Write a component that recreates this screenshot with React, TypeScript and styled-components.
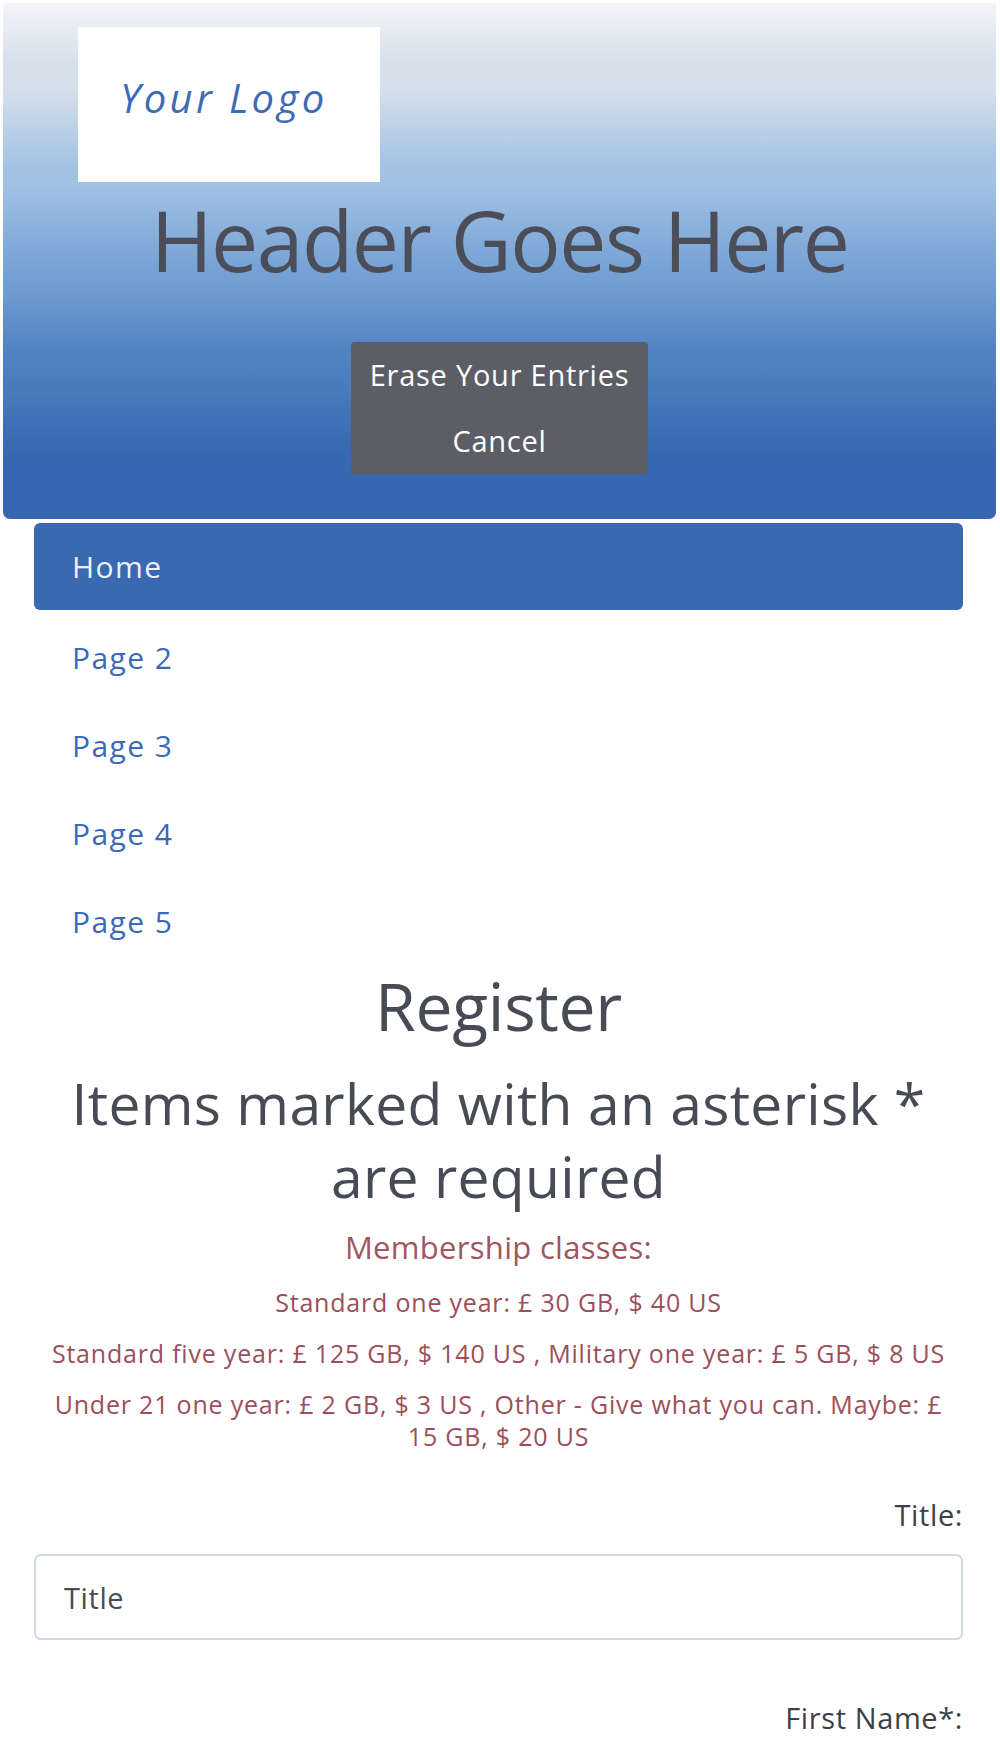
import React from "react";
import styled, { createGlobalStyle } from "styled-components";

const Global = createGlobalStyle`
  html, body { margin: 0; padding: 0; background: #ffffff; }
  body { font-family: "Open Sans", "Noto Sans", sans-serif; color: #474b55; }
  * { box-sizing: border-box; }
`;

const Page = styled.div`
  width: 1000px;
  display: flex;
  flex-direction: column;
`;

const Header = styled.header`
  margin: 3px 4px 0 3px;
  height: 516px;
  border-radius: 0 0 7px 7px;
  background: linear-gradient(
    to bottom,
    #f3f5f9 0%,
    #d6e0eb 11.5%,
    #d6e0eb 16.5%,
    #a2c2e4 32%,
    #a2c2e4 35%,
    #76a2d5 51.4%,
    #739fd3 54.3%,
    #5383c2 66.9%,
    #5080c0 70.7%,
    #3866b0 88%,
    #3866b0 100%
  );
  display: flex;
  flex-direction: column;
  padding: 24px 0 0 75px;
`;

const LogoBox = styled.div`
  width: 302px;
  height: 155px;
  background: #ffffff;
  display: flex;
  align-items: center;
  padding-left: 42px;
  padding-bottom: 14px;
`;

const LogoText = styled.span`
  font-family: "Open Sans", sans-serif;
  font-style: italic;
  font-size: 40px;
  color: #3d6bb5;
  letter-spacing: 3.4px;
`;

const Title = styled.h1`
  margin: 0 0 0 -75px;
  font-family: "Open Sans", sans-serif;
  font-weight: 400;
  font-size: 84px;
  line-height: 116px;
  letter-spacing: -1.5px;
  text-align: center;
  color: #4b4e58;
`;

const ButtonBox = styled.div`
  align-self: center;
  margin: 44px 0 0 -75px;
  width: 297px;
  height: 132px;
  background: #5c5d65;
  border-radius: 4px;
  display: flex;
  flex-direction: column;
  align-items: center;
  justify-content: center;
  gap: 22px;
`;

const HeaderButton = styled.span`
  font-family: "Open Sans", sans-serif;
  font-size: 29px;
  line-height: 44px;
  color: #ffffff;
  letter-spacing: 0.75px;
`;

const Nav = styled.nav`
  display: flex;
  flex-direction: column;
  padding: 4px 37px 0 34px;
`;

const NavItem = styled.a<{ $active?: boolean }>`
  display: flex;
  align-items: center;
  height: ${(p) => (p.$active ? "87px" : "88px")};
  margin-bottom: ${(p) => (p.$active ? "3px" : "0")};
  padding-left: 38px;
  border-radius: 6px;
  background: ${(p) => (p.$active ? "#3a69b1" : "transparent")};
  color: ${(p) => (p.$active ? "#eef2f8" : "#3a6ab5")};
  font-family: "Open Sans", sans-serif;
  font-size: 30px;
  text-decoration: none;
  letter-spacing: 1.4px;
`;

const Main = styled.main`
  display: flex;
  flex-direction: column;
  align-items: center;
  padding: 5px 37px 0 34px;
`;

const Heading = styled.h2`
  margin: 0;
  font-family: "Open Sans", sans-serif;
  font-weight: 400;
  font-size: 66px;
  line-height: 70px;
  letter-spacing: -0.3px;
  color: #474b55;
  text-align: center;
`;

const SubHeading = styled.h3`
  margin: 27px 0 0;
  font-family: "Open Sans", sans-serif;
  font-weight: 400;
  font-size: 57px;
  line-height: 73px;
  letter-spacing: 0.3px;
  color: #474b55;
  text-align: center;
  width: 100%;
`;

const Membership = styled.p`
  margin: 14px 0 0;
  font-family: "Open Sans", sans-serif;
  font-size: 31px;
  line-height: 40px;
  letter-spacing: 0.3px;
  color: #a0555f;
  text-align: center;
`;

const Price = styled.p`
  margin: 19px 0 0;
  max-width: 900px;
  font-family: "Open Sans", sans-serif;
  font-size: 25px;
  line-height: 32px;
  letter-spacing: 0.8px;
  color: #9c4f5a;
  text-align: center;
`;

const Field = styled.div<{ $gap: number }>`
  width: 100%;
  display: flex;
  flex-direction: column;
  margin-top: ${(p) => p.$gap}px;
`;

const Label = styled.label`
  align-self: flex-end;
  font-family: "Open Sans", sans-serif;
  font-size: 29px;
  line-height: 36px;
  color: #3c3f47;
  letter-spacing: 0.6px;
`;

const Input = styled.input`
  margin-top: 21px;
  width: 100%;
  height: 86px;
  border: 2px solid #cfd8e6;
  border-radius: 7px;
  padding: 0 28px;
  font-family: "Open Sans", sans-serif;
  font-size: 29px;
  letter-spacing: 0.6px;
  color: #3c3f47;
  outline: none;
  &::placeholder { color: #4a4c55; opacity: 1; }
`;

const pages = ["Page 2", "Page 3", "Page 4", "Page 5"];
const prices = [
  "Standard one year: £ 30 GB, $ 40 US",
  "Standard five year: £ 125 GB, $ 140 US , Military one year: £ 5 GB, $ 8 US",
  "Under 21 one year: £ 2 GB, $ 3 US , Other - Give what you can. Maybe: £ 15 GB, $ 20 US",
];

export default function App() {
  return (
    <Page>
      <Global />
      <Header>
        <LogoBox>
          <LogoText>Your Logo</LogoText>
        </LogoBox>
        <Title>Header Goes Here</Title>
        <ButtonBox>
          <HeaderButton>Erase Your Entries</HeaderButton>
          <HeaderButton>Cancel</HeaderButton>
        </ButtonBox>
      </Header>
      <Nav>
        <NavItem $active href="#">Home</NavItem>
        {pages.map((p) => (
          <NavItem key={p} href="#">{p}</NavItem>
        ))}
      </Nav>
      <Main>
        <Heading>Register</Heading>
        <SubHeading>Items marked with an asterisk * are required</SubHeading>
        <Membership>Membership classes:</Membership>
        {prices.map((p) => (
          <Price key={p}>{p}</Price>
        ))}
        <Field $gap={45}>
          <Label>Title:</Label>
          <Input placeholder="Title" />
        </Field>
        <Field $gap={60}>
          <Label>First Name*:</Label>
        </Field>
      </Main>
    </Page>
  );
}
